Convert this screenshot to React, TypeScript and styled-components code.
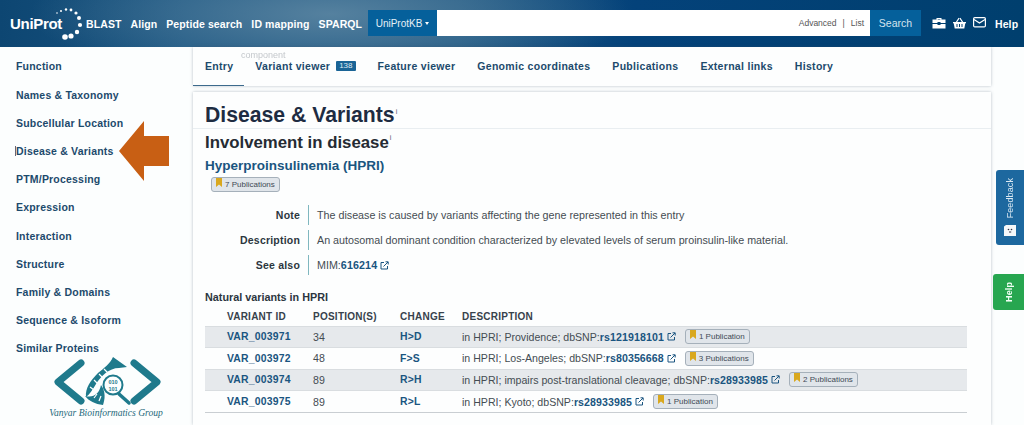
import React from "react";
import styled, { createGlobalStyle } from "styled-components";

const Global = createGlobalStyle`
  html, body { margin: 0; padding: 0; background: #fdfefe; overflow: hidden; }
  body { font-family: "Liberation Sans", Arial, sans-serif; }
  * { box-sizing: border-box; }
`;

const Page = styled.div`
  position: relative;
  width: 1024px;
  height: 425px;
  overflow: hidden;
  background: #fcfefe;
`;

const Header = styled.header`
  height: 47px;
  display: flex;
  align-items: center;
  padding-left: 9px;
  background:
    radial-gradient(ellipse 300px 70px at 330px 14px, #55819f 0%, rgba(85,129,159,0) 100%),
    linear-gradient(90deg, #0d4672 0%, #1a5581 18%, #1d5681 45%, #04427a 62%, #003f6e 100%);
`;

const LogoBlock = styled.div`
  position: relative;
  width: 77px;
  height: 40px;
  flex: none;
`;

const LogoText = styled.span`
  position: absolute;
  left: 1px;
  top: 11px;
  color: #fff;
  font-size: 15px;
  font-weight: 700;
  letter-spacing: -0.3px;
  line-height: 18px;
`;

const LogoDots = styled.svg`
  position: absolute;
  left: 40px;
  top: 2px;
`;

const HeaderNav = styled.nav`
  display: flex;
  gap: 9px;
  width: 282px;
`;

const HeaderLink = styled.span`
  color: #fff;
  font-size: 10.5px;
  font-weight: 700;
  letter-spacing: 0.1px;
  white-space: nowrap;
`;

const SearchBar = styled.div`
  display: flex;
  height: 26px;
  width: 553px;
  margin-top: -1px;
  flex: none;
`;

const Dropdown = styled.div`
  width: 69px;
  background: #05609b;
  color: #e6eff6;
  font-size: 10px;
  display: flex;
  align-items: center;
  justify-content: center;
  gap: 3px;
`;

const Caret = styled.span`
  border-left: 2px solid transparent;
  border-right: 2px solid transparent;
  border-top: 3px solid #fff;
`;

const SearchInput = styled.div`
  flex: 1;
  background: #fff;
  display: flex;
  align-items: center;
  justify-content: flex-end;
  gap: 6px;
  padding-right: 6px;
  color: #555;
  font-size: 8.5px;
`;

const SearchButton = styled.div`
  width: 51px;
  background: #05609b;
  color: #d5e4ef;
  font-size: 10.5px;
  display: flex;
  align-items: center;
  justify-content: center;
`;

const HeaderIcons = styled.div`
  display: flex;
  align-items: center;
  gap: 7px;
  margin-left: 11px;
  margin-top: -2px;
  color: #fff;
`;

const HelpLink = styled(HeaderLink)`
  margin-left: 2px;
  margin-top: 2px;
`;

const Body = styled.div`
  display: flex;
  height: 378px;
`;

const Sidebar = styled.aside`
  width: 193px;
  flex: none;
  padding-top: 5.4px;
  display: flex;
  flex-direction: column;
`;

const SideItem = styled.div<{ $active?: boolean }>`
  height: 28.2px;
  display: flex;
  align-items: center;
  margin-left: 13px;
  padding-left: 3px;
  font-size: 10.5px;
  font-weight: 700;
  letter-spacing: 0.2px;
  color: #1c4a6c;
  white-space: nowrap;
  & > span {
    ${(p) => p.$active && "box-shadow: -3px 0 0 -2px #667;"}
    line-height: 14px;
  }
`;

const Main = styled.main`
  width: 798px;
  flex: none;
  display: flex;
  flex-direction: column;
  gap: 6px;
`;

const Card = styled.section`
  background: #fdfefe;
  box-shadow: 0 0 3px rgba(60, 80, 100, 0.35);
`;

const TabsCard = styled(Card)`
  position: relative;
  height: 39px;
  display: flex;
  padding-left: 12px;
`;

const Ghost = styled.span`
  position: absolute;
  left: 48px;
  top: 3px;
  font-size: 9px;
  color: #c4c8cc;
  filter: blur(0.6px);
`;

const Tab = styled.div<{ $active?: boolean }>`
  display: flex;
  align-items: center;
  gap: 6px;
  margin-right: 22px;
  height: 39px;
  padding-bottom: 1px;
  font-size: 10.5px;
  font-weight: 700;
  letter-spacing: 0.3px;
  color: #1c4a6c;
  white-space: nowrap;
  position: relative;
  ${(p) =>
    p.$active &&
    `&::after { content: ""; position: absolute; left: -12px; right: -11px; bottom: 0; height: 1px; background: #3c6a8c; }`}
`;

const CountBadge = styled.span`
  background: #1a6496;
  color: #dfeaf2;
  font-size: 8px;
  font-weight: 400;
  letter-spacing: 0;
  height: 10px;
  line-height: 10px;
  padding: 0 3px;
  border-radius: 1px;
`;

const ContentCard = styled(Card)`
  flex: 1;
  padding-left: 12px;
  min-height: 0;
`;

const PageTitle = styled.h1`
  margin: 0 0 0 -12px;
  padding: 11px 0 0 12px;
  height: 37px;
  border-bottom: 1px solid #e9eef1;
  font-size: 21.2px;
  line-height: 23px;
  font-weight: 700;
  color: #1e2c42;
`;

const Info = styled.sup`
  font-size: 7px;
  font-weight: 400;
  color: #556;
  vertical-align: 8px;
  line-height: 0;
  margin-left: 1px;
`;

const SectionTitle = styled.h2`
  margin: 4px 0 0;
  font-size: 16.8px;
  line-height: 20px;
  font-weight: 700;
  color: #252b33;
`;

const DiseaseName = styled.h3`
  margin: 4px 0 0;
  font-size: 13.5px;
  line-height: 17px;
  font-weight: 700;
  color: #1a5580;
`;

const Badge = styled.span`
  display: inline-flex;
  align-items: center;
  gap: 3px;
  height: 15px;
  padding: 0 4px;
  background: #e0e5ea;
  border: 1px solid #a5b0ba;
  border-radius: 3px;
  font-size: 8px;
  color: #3f4a55;
  white-space: nowrap;
`;

const BadgeRow = styled.div`
  margin: 3px 0 0 6px;
  height: 15px;
  display: flex;
`;

const Facts = styled.div`
  margin-top: 13px;
  display: flex;
  flex-direction: column;
  gap: 5px;
`;

const FactRow = styled.div`
  display: flex;
  height: 20px;
  align-items: stretch;
`;

const FactLabel = styled.div`
  width: 95px;
  text-align: right;
  font-size: 10.5px;
  font-weight: 700;
  letter-spacing: 0.2px;
  color: #2c3640;
  display: flex;
  align-items: center;
  justify-content: flex-end;
`;

const FactValue = styled.div`
  margin-left: 8px;
  padding-left: 8px;
  border-left: 1px solid #7fb7bf;
  font-size: 10.72px;
  color: #444c52;
  display: flex;
  align-items: center;
  white-space: nowrap;
`;

const LinkText = styled.span`
  color: #1a5580;
  font-weight: 700;
  letter-spacing: 0.1px;
`;

const VariantsTitle = styled.h4`
  margin: 15px 0 0;
  font-size: 10.8px;
  line-height: 14px;
  font-weight: 700;
  color: #2c3640;
`;

const Table = styled.table`
  margin-top: 4px;
  width: 762px;
  border-collapse: collapse;
  table-layout: fixed;
  font-size: 10.6px;
  color: #444c52;
`;

const HeadCell = styled.th`
  height: 18px;
  padding: 0;
  text-align: left;
  font-size: 10px;
  font-weight: 700;
  letter-spacing: 0.25px;
  color: #37424c;
`;

const Row = styled.tr<{ $shade?: boolean }>`
  height: 21.6px;
  background: ${(p) => (p.$shade ? "#e6e9ec" : "transparent")};
  border-top: 1px solid #d9dde0;
  &:last-child { border-bottom: 1px solid #c9ced2; }
`;

const Cell = styled.td`
  padding: 0;
  white-space: nowrap;
`;

const DescCell = styled(Cell)`
  & > div { display: flex; align-items: center; }
`;

const LinkCell = styled(Cell)`
  color: #1a5580;
  font-weight: 700;
  font-size: 10.4px;
  letter-spacing: 0.2px;
`;

const Feedback = styled.div`
  position: absolute;
  left: 996px;
  top: 170px;
  width: 28px;
  height: 75px;
  background: #1d689f;
  border-radius: 3px 0 0 3px;
  display: flex;
  flex-direction: column;
  align-items: center;
  justify-content: flex-end;
  padding-bottom: 9px;
  gap: 7px;
  color: #dce9f2;
`;

const VerticalText = styled.span`
  writing-mode: vertical-rl;
  transform: rotate(180deg);
  font-size: 9px;
  letter-spacing: 0.1px;
`;

const HelpTab = styled.div`
  position: absolute;
  left: 993px;
  top: 274px;
  width: 31px;
  height: 36px;
  background: #27a650;
  border-radius: 3px 0 0 3px;
  display: flex;
  align-items: center;
  justify-content: center;
  color: #f2fff6;
  font-weight: 700;
`;

const Arrow = styled.svg`
  position: absolute;
  left: 119px;
  top: 121px;
`;

const Emblem = styled.svg`
  position: absolute;
  left: 48px;
  top: 354px;
`;

const Bookmark = () => (
  <svg width="6" height="9" viewBox="0 0 6 9" style={{ marginTop: -4 }}>
    <path d="M0 0H6V9L3 6.6L0 9Z" fill="#d9a81e" />
  </svg>
);

const Ext = () => (
  <svg width="9" height="9" viewBox="0 0 9 9" fill="none" stroke="#1a5580" strokeWidth="1" style={{ marginLeft: 3, flex: "none" }}>
    <path d="M4 1.5H1V8H7.5V5" />
    <path d="M3.5 5.5L8 1M5.5 .8H8.2V3.5" />
  </svg>
);

const nav = ["Function", "Names & Taxonomy", "Subcellular Location", "Disease & Variants", "PTM/Processing", "Expression", "Interaction", "Structure", "Family & Domains", "Sequence & Isoform", "Similar Proteins"];

const rows = [
  { id: "VAR_003971", pos: "34", ch: "H>D", desc: "in HPRI; Providence; dbSNP:", rs: "rs121918101", pub: "1 Publication" },
  { id: "VAR_003972", pos: "48", ch: "F>S", desc: "in HPRI; Los-Angeles; dbSNP:", rs: "rs80356668", pub: "3 Publications" },
  { id: "VAR_003974", pos: "89", ch: "R>H", desc: "in HPRI; impairs post-translational cleavage; dbSNP:", rs: "rs28933985", pub: "2 Publications" },
  { id: "VAR_003975", pos: "89", ch: "R>L", desc: "in HPRI; Kyoto; dbSNP:", rs: "rs28933985", pub: "1 Publication" },
];

const PubGap = styled.span`
  width: 9px;
  flex: none;
`;

export default function App() {
  return (
    <Page>
      <Global />
      <Header>
        <LogoBlock>
          <LogoText>UniProt</LogoText>
          <LogoDots width="40" height="36" viewBox="0 0 40 36" fill="#fff">
            <circle cx="8" cy="7" r=".8" /><circle cx="12" cy="5" r="1" /><circle cx="17" cy="3.5" r="1.2" /><circle cx="22" cy="4" r="1.4" />
            <circle cx="27" cy="7" r="1.6" /><circle cx="30" cy="12" r="2" /><circle cx="31" cy="19" r="2.1" /><circle cx="28" cy="26" r="2.2" />
            <circle cx="22" cy="30" r="2.6" /><circle cx="16" cy="31" r="2.8" />
          </LogoDots>
        </LogoBlock>
        <HeaderNav>
          <HeaderLink>BLAST</HeaderLink>
          <HeaderLink>Align</HeaderLink>
          <HeaderLink>Peptide search</HeaderLink>
          <HeaderLink>ID mapping</HeaderLink>
          <HeaderLink>SPARQL</HeaderLink>
        </HeaderNav>
        <SearchBar>
          <Dropdown>UniProtKB <Caret /></Dropdown>
          <SearchInput><span>Advanced</span><span>|</span><span>List</span></SearchInput>
          <SearchButton>Search</SearchButton>
        </SearchBar>
        <HeaderIcons>
          <svg width="14" height="12" viewBox="0 0 14 12" fill="currentColor">
            <path d="M4.5 2.5V1h5v1.5h4V6H8.5V5h-3v1H.5V2.5zM5.7 2.5h2.6V2H5.7zM.5 7h5v1h3V7h5v4.5H.5z" />
          </svg>
          <svg width="13" height="12" viewBox="0 0 13 12" fill="currentColor">
            <path d="M0 5h2.8L5.6.8l.9.6L4.2 5h4.6L6.5 1.4l.9-.6L10.2 5H13v1.3h-.7L11.3 11.5H1.7L.7 6.3H0zM3.5 7v3h1V7zm2.5 0v3h1V7zm2.5 0v3h1V7z" />
          </svg>
          <svg width="13" height="11" viewBox="0 0 13 11" fill="none" stroke="currentColor" strokeWidth="1.2">
            <rect x=".6" y=".6" width="11.8" height="9.3" rx="1.2" />
            <path d="M1 2.5L6.5 6L12 2.5" />
          </svg>
          <HelpLink>Help</HelpLink>
        </HeaderIcons>
      </Header>
      <Body>
        <Sidebar>
          {nav.map((n) => (
            <SideItem key={n} $active={n === "Disease & Variants"}><span>{n}</span></SideItem>
          ))}
        </Sidebar>
        <Main>
          <TabsCard>
            <Ghost>component</Ghost>
            <Tab $active>Entry</Tab>
            <Tab>Variant viewer <CountBadge>138</CountBadge></Tab>
            <Tab>Feature viewer</Tab>
            <Tab>Genomic coordinates</Tab>
            <Tab>Publications</Tab>
            <Tab>External links</Tab>
            <Tab>History</Tab>
          </TabsCard>
          <ContentCard>
            <PageTitle>Disease &amp; Variants<Info>i</Info></PageTitle>
            <SectionTitle>Involvement in disease<Info>i</Info></SectionTitle>
            <DiseaseName>Hyperproinsulinemia (HPRI)</DiseaseName>
            <BadgeRow><Badge><Bookmark /> 7 Publications</Badge></BadgeRow>
            <Facts>
              <FactRow>
                <FactLabel>Note</FactLabel>
                <FactValue>The disease is caused by variants affecting the gene represented in this entry</FactValue>
              </FactRow>
              <FactRow>
                <FactLabel>Description</FactLabel>
                <FactValue>An autosomal dominant condition characterized by elevated levels of serum proinsulin-like material.</FactValue>
              </FactRow>
              <FactRow>
                <FactLabel>See also</FactLabel>
                <FactValue>MIM:<LinkText>616214</LinkText><Ext /></FactValue>
              </FactRow>
            </Facts>
            <VariantsTitle>Natural variants in HPRI</VariantsTitle>
            <Table>
              <colgroup>
                <col style={{ width: 22 }} /><col style={{ width: 86 }} /><col style={{ width: 87 }} /><col style={{ width: 62 }} /><col />
              </colgroup>
              <thead>
                <tr>
                  <HeadCell />
                  <HeadCell>VARIANT ID</HeadCell>
                  <HeadCell>POSITION(S)</HeadCell>
                  <HeadCell>CHANGE</HeadCell>
                  <HeadCell>DESCRIPTION</HeadCell>
                </tr>
              </thead>
              <tbody>
                {rows.map((r, i) => (
                  <Row key={r.id} $shade={i % 2 === 0}>
                    <Cell />
                    <LinkCell>{r.id}</LinkCell>
                    <Cell>{r.pos}</Cell>
                    <LinkCell>{r.ch}</LinkCell>
                    <DescCell>
                      <div>
                        {r.desc}<LinkText>{r.rs}</LinkText><Ext /><PubGap />
                        <Badge><Bookmark /> {r.pub}</Badge>
                      </div>
                    </DescCell>
                  </Row>
                ))}
              </tbody>
            </Table>
          </ContentCard>
        </Main>
      </Body>

      <Feedback>
        <VerticalText>Feedback</VerticalText>
        <svg width="12" height="11" viewBox="0 0 12 11">
          <path d="M0 1.5L2 0H12V11H0Z" fill="#f4f7f9" />
          <circle cx="4.5" cy="4.5" r=".8" fill="#334" /><circle cx="7.5" cy="4.5" r=".8" fill="#334" />
          <path d="M5 7H7.2" stroke="#334" strokeWidth="1" />
        </svg>
      </Feedback>
      <HelpTab><VerticalText>Help</VerticalText></HelpTab>

      <Arrow width="50" height="60" viewBox="0 0 50 60">
        <path d="M0 30L25 0V15H50V45H25V60Z" fill="#c85f14" />
      </Arrow>

      <Emblem width="116" height="68" viewBox="0 0 116 68">
        <path d="M33 9L10 28L33 47" fill="none" stroke="#1f7a8c" strokeWidth="7" strokeLinecap="round" strokeLinejoin="round" />
        <path d="M86 9L109 28L86 47" fill="none" stroke="#1f7a8c" strokeWidth="7" strokeLinecap="round" strokeLinejoin="round" />
        <path d="M65 3L79 13L71 14C61 14 53 22 48 30C45 35 42 40 38 43C37 34 43 26 50 19C56 14 62 10 65 3Z" fill="#1f7a8c" />
        <path d="M37 42C41 47 47 50 55 51C57 45 58 38 53 31C51 40 46 44 37 42Z" fill="#1f7a8c" />
        <path d="M56 15L60 19M51 20L55 24M46 26L50 30M42 33L46 36M46 44L49 40M51 47L53 42" stroke="#fdfefe" strokeWidth="1.2" />
        <path d="M71 40L81 49" stroke="#1f7a8c" strokeWidth="3.5" strokeLinecap="round" />
        <circle cx="65" cy="31" r="9.5" fill="#fdfefe" stroke="#1f7a8c" strokeWidth="2" />
        <text x="65" y="29.5" fontSize="5.5" fontWeight="700" textAnchor="middle" fill="#1f7a8c" fontFamily="Liberation Sans, sans-serif">010</text>
        <text x="65" y="36.5" fontSize="5.5" fontWeight="700" textAnchor="middle" fill="#1f7a8c" fontFamily="Liberation Sans, sans-serif">101</text>
        <text x="58" y="62" fontSize="9.6" fontStyle="italic" textAnchor="middle" fill="#1f6a7c" fontFamily="Liberation Serif, serif">Vanyar Bioinformatics Group</text>
      </Emblem>
    </Page>
  );
}
